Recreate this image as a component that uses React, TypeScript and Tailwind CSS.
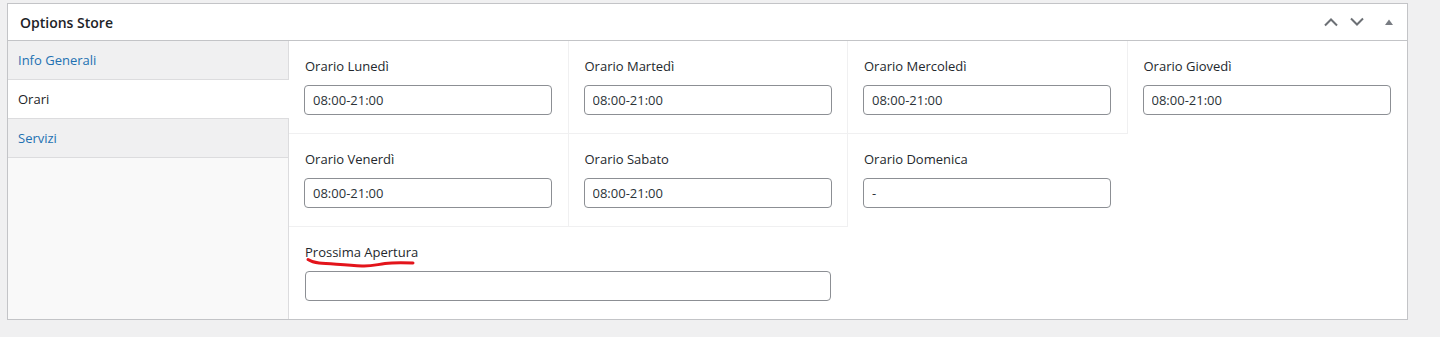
import React from "react";

const days = [
  { label: "Orario Lunedì", value: "08:00-21:00", bordered: true },
  { label: "Orario Martedì", value: "08:00-21:00", bordered: true },
  { label: "Orario Mercoledì", value: "08:00-21:00", bordered: true },
  { label: "Orario Giovedì", value: "08:00-21:00", bordered: false },
  { label: "Orario Venerdì", value: "08:00-21:00", bordered: true },
  { label: "Orario Sabato", value: "08:00-21:00", bordered: true },
  { label: "Orario Domenica", value: "-", bordered: false },
];

function Field({
  label,
  value,
  bordered,
}: {
  label: string;
  value: string;
  bordered: boolean;
}) {
  return (
    <div
      className={
        bordered
          ? "px-[15px] pt-[15px] pb-[18px] border-r border-b border-[#f0f0f1]"
          : "px-[15px] pt-[15px] pb-[18px] border-b border-transparent"
      }
    >
      <label className="block pl-px text-[13px] leading-5 text-[#23282d]">{label}</label>
      <input
        readOnly
        value={value}
        className="mt-[9px] block w-[248px] h-[30px] px-2 rounded border border-[#8c8f94] bg-white text-[13px] text-[#2c3338] outline-none"
      />
    </div>
  );
}

function Tab({ name, active }: { name: string; active?: boolean }) {
  return (
    <div
      className={
        active
          ? "h-[39px] pl-[10px] pt-[2px] flex items-center bg-white text-[#1d2327] text-[13px] border-b border-[#dcdcde] -mr-px"
          : "h-[39px] pl-[10px] pt-[2px] flex items-center bg-[#f0f0f1] text-[#2271b1] text-[13px] border-b border-[#dcdcde]"
      }
    >
      {name}
    </div>
  );
}

export default function App() {
  return (
    <div
      className="w-[1440px] h-[337px] bg-[#f0f0f1] pt-[3px] pl-[7px]"
      style={{ fontFamily: '"Open Sans", "Noto Sans", sans-serif' }}
    >
      <div className="w-[1401px] border border-[#c3c4c7] bg-white">
        {/* header */}
        <div className="h-[37px] flex items-center justify-between border-b border-[#c3c4c7] pl-3 pr-[13px]">
          <h2 className="text-[14px] font-semibold text-[#1d2327]">Options Store</h2>
          <div className="flex items-center">
            <svg width="16" height="10" viewBox="0 0 16 10" className="mr-[10px]">
              <path d="M2 8.5 L8 2.5 L14 8.5" fill="none" stroke="#6c7075" strokeWidth="2" />
            </svg>
            <svg width="16" height="10" viewBox="0 0 16 10" className="mr-[19px]">
              <path d="M2 1.5 L8 7.5 L14 1.5" fill="none" stroke="#6c7075" strokeWidth="2" />
            </svg>
            <svg width="10" height="8" viewBox="0 0 10 8">
              <path d="M1 7 L5 1.5 L9 7 Z" fill="#787c82" />
            </svg>
          </div>
        </div>

        {/* body */}
        <div className="flex">
          <div className="w-[281px] shrink-0 bg-[#f9f9f9] border-r border-[#dcdcde]">
            <Tab name="Info Generali" />
            <Tab name="Orari" active />
            <Tab name="Servizi" />
          </div>

          <div className="flex-1 grid grid-cols-4">
            {days.map((d) => (
              <Field key={d.label} {...d} />
            ))}
            <div />
            <div className="col-span-2 px-4 pt-[15px] pb-[18px]">
              <div className="relative">
                <label className="block text-[13px] leading-5 text-[#23282d]">Prossima Apertura</label>
                <svg
                  width="116"
                  height="12"
                  viewBox="0 0 116 12"
                  className="absolute left-0 top-[15px] pointer-events-none"
                >
                  <path
                    d="M3 2.5 C6 4.5 9 5.5 14 6 C25 7 40 7.5 57 9 C66 9.5 72 7.5 80 6.5 C88 5.5 95 5.5 108 6"
                    fill="none"
                    stroke="#e3141b"
                    strokeWidth="3"
                    strokeLinecap="round"
                  />
                </svg>
              </div>
              <input
                readOnly
                value=""
                className="mt-[9px] block w-[526px] h-[30px] px-2 rounded border border-[#8c8f94] bg-white text-[13px] outline-none"
              />
            </div>
          </div>
        </div>
      </div>
    </div>
  );
}
